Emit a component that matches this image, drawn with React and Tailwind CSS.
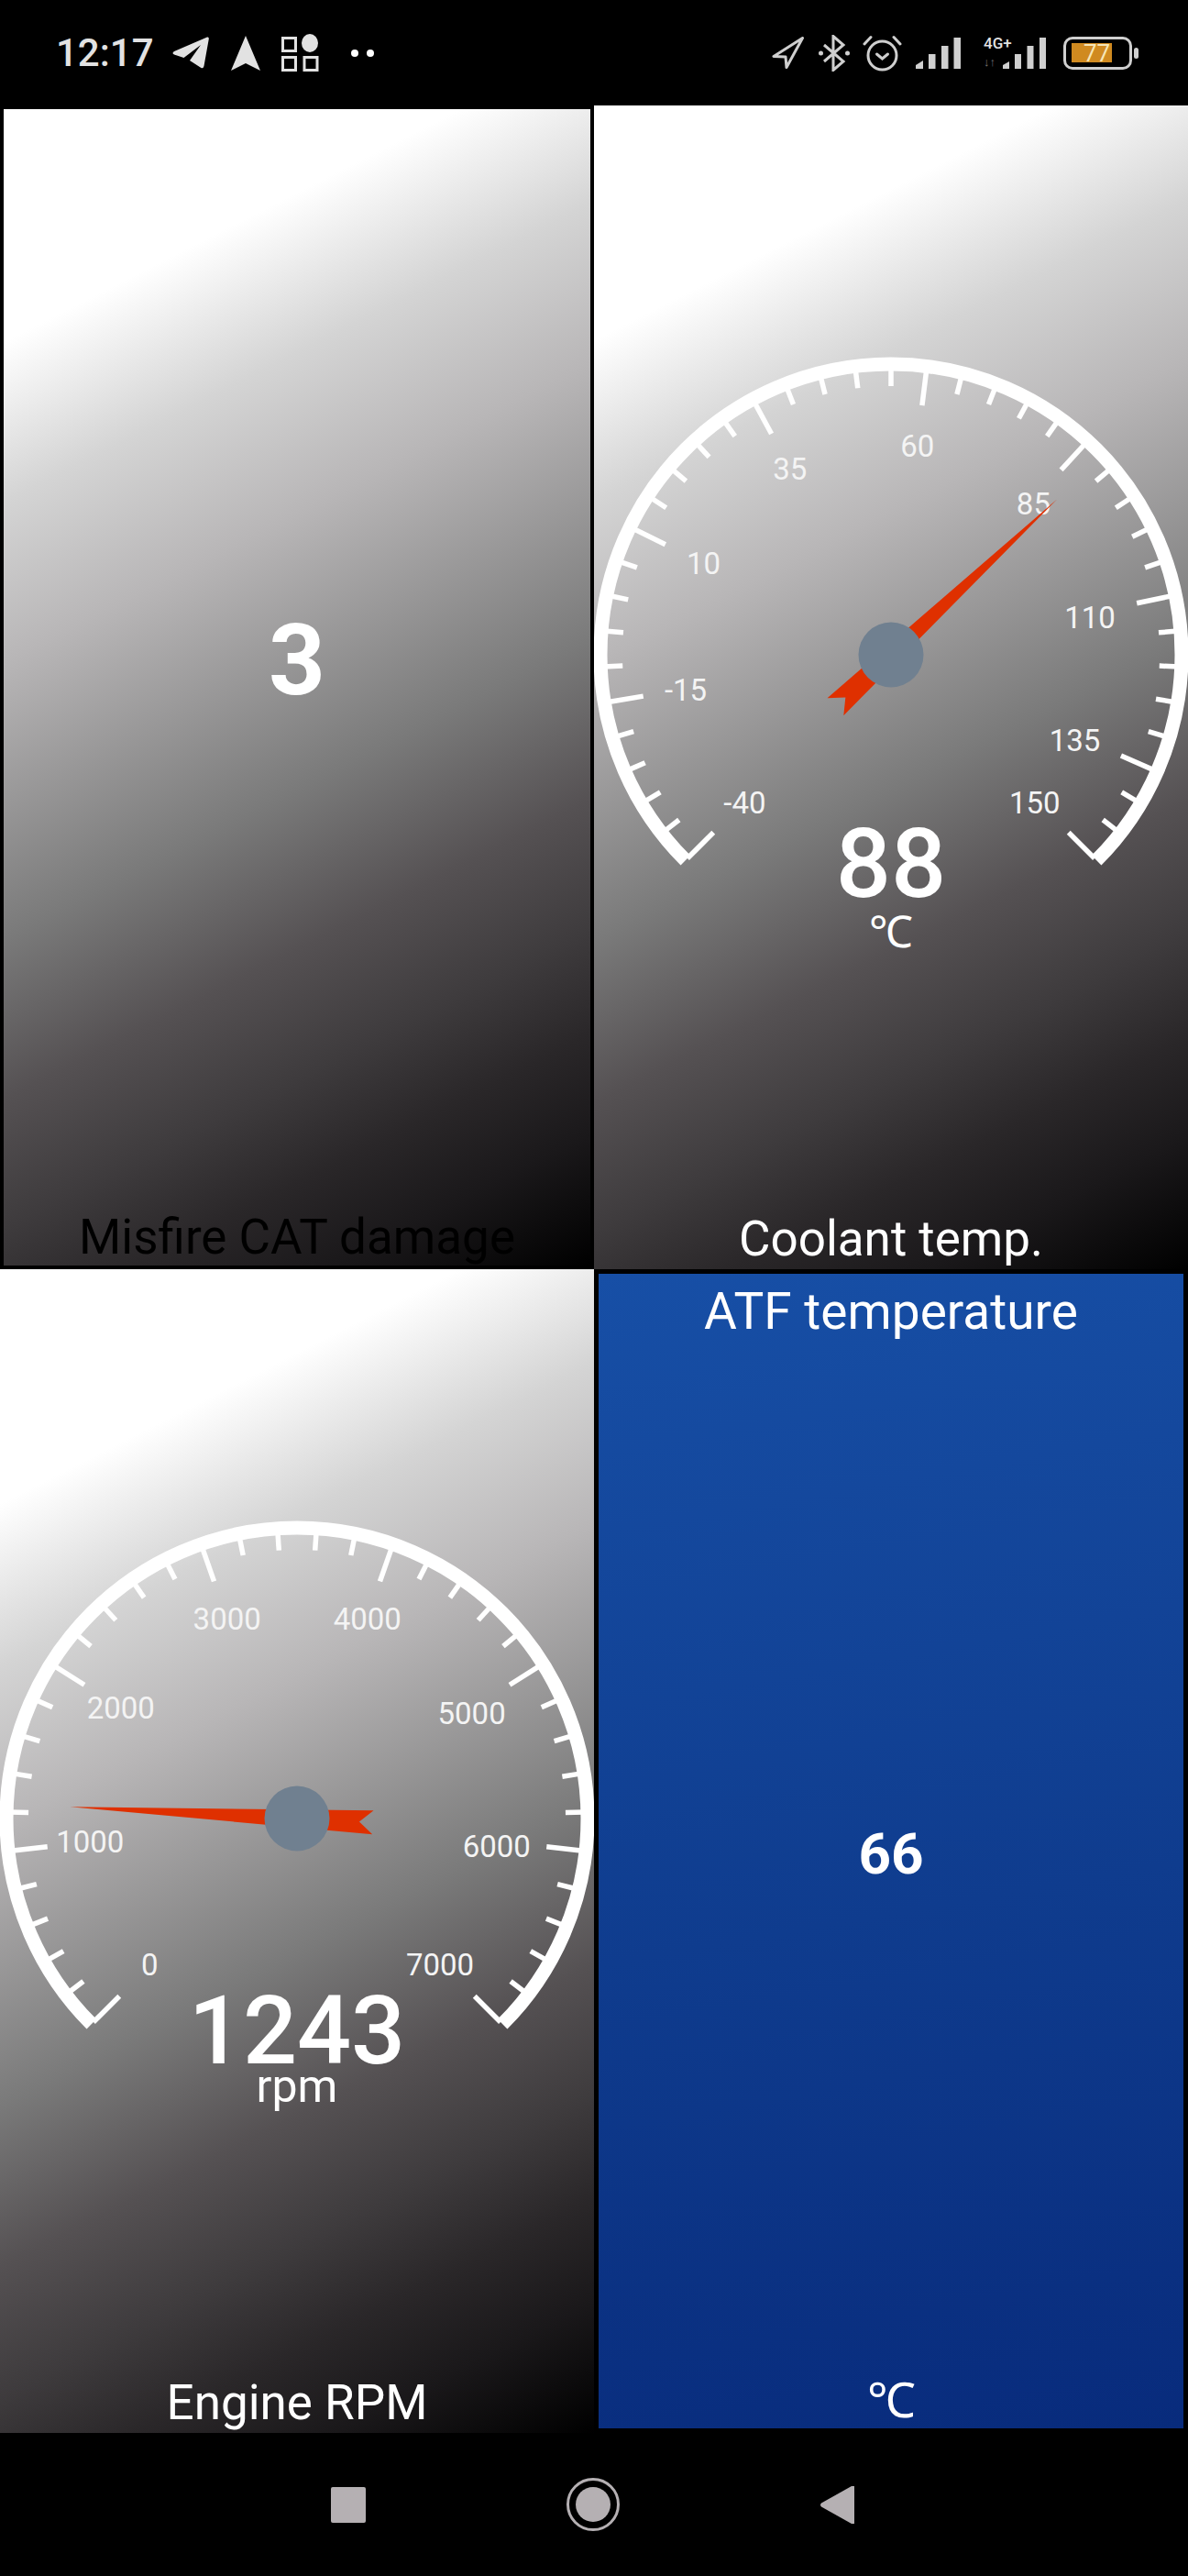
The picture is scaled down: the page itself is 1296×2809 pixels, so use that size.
// OBD dashboard screen: four tiles between the phone status bar and nav bar
const GRADIENT = 'bg-[linear-gradient(153deg,#fff_16%,#d4d4d4_27%,#b8b6b7_38%,#7a7a7a_57%,#555153_68%,#3e3b3d_77%,#2a2729_84%,#1a181a_91%,#000_100%)]';

const polar = (r, deg) => {
    const rad = (deg * Math.PI) / 180;
    return [324 + r * Math.sin(rad), 599 - r * Math.cos(rad)];
};

function Gauge({ min, max, step, minorStep, value, labels, reading, unit, readingY, readingSize, unitY, unitSize }) {
    const sweep = 270 / (max - min);
    const toDeg = (v) => (v - min) * sweep - 135;
    const ticks = [];
    for (let v = min; v <= max; v += minorStep) {
        const major = (v - min) % step === 0 || v === max;
        const [x1, y1] = polar(314, toDeg(v));
        const [x2, y2] = polar(major ? 274 : 293, toDeg(v));
        ticks.push(<line key={v} x1={x1} y1={y1} x2={x2} y2={y2} strokeWidth="5.5" />);
    }
    const [ax, ay] = polar(317, -135);
    const [bx, by] = polar(317, 135);

    return (
        <svg viewBox="0 0 648 1209" className="block w-full h-[1209px]">
            <g className="stroke-white" fill="none">
                <path d={`M${ax} ${ay} A317 317 0 1 1 ${bx} ${by}`} strokeWidth="15" />
                {ticks}
            </g>
            {labels.map(([text, dx, dy]) => (
                <text key={text} x={324 + dx} y={599 + dy + 12} textAnchor="middle" fontSize="33" className="fill-[#f4f4f4]">{text}</text>
            ))}
            <polygon points="0,-248 13,83 0,68 -13,83" className="fill-[#df3000]" transform={`translate(324 599) rotate(${toDeg(value)})`} />
            <circle cx="324" cy="599" r="35.5" className="fill-[#708090]" />
            <text x="324" y={readingY} textAnchor="middle" fontSize={readingSize} className="fill-white font-medium">{reading}</text>
            <text x="324" y={unitY} textAnchor="middle" fontSize={unitSize} className="fill-white">{unit}</text>
        </svg>
    );
}

const StatusIcons = {
    Telegram: () => (
        <svg width="40" height="35" viewBox="0 0 40 35" className="fill-[#e2e2e2]">
            <path d="M38 0.6 Q40 0 39.8 2.5 L34.5 32 Q33.8 35.4 31 33.8 L19 26 L31 9 L12.5 23 L2 19.5 Q-1 18 2 16 Z" />
        </svg>
    ),
    Arrow: () => (
        <svg width="32" height="38" viewBox="0 0 32 38" className="fill-[#e2e2e2]">
            <path d="M16 0 L32 38 L16 30 L0 38 Z" />
        </svg>
    ),
    Apps: () => (
        <svg width="41" height="41" viewBox="0 0 41 41" fill="none" className="stroke-[#e2e2e2]" strokeWidth="3">
            <rect x="1.5" y="4.5" width="14" height="14" />
            <rect x="1.5" y="25.5" width="14" height="14" />
            <rect x="25" y="25.5" width="14" height="14" />
            <ellipse cx="31" cy="10" rx="9" ry="10" className="fill-[#e2e2e2]" strokeWidth="0" />
        </svg>
    ),
    Location: () => (
        <svg width="35" height="35" viewBox="0 0 35 35" fill="none" className="stroke-[#cfcfcf]" strokeWidth="3" strokeLinejoin="round">
            <path d="M33.5 1.5 L2 21.5 L15 22 L16 33.5 Z" />
        </svg>
    ),
    Bluetooth: () => (
        <svg width="34" height="40" viewBox="0 0 34 40" fill="none" className="stroke-[#cfcfcf]" strokeWidth="3">
            <path d="M6 11 L27 29 L16 38.5 L16 1.5 L27 11 L6 29" />
            <circle cx="2.5" cy="20" r="2.5" className="fill-[#cfcfcf]" strokeWidth="0" />
            <circle cx="31.5" cy="20" r="2.5" className="fill-[#cfcfcf]" strokeWidth="0" />
        </svg>
    ),
    Alarm: () => (
        <svg width="43" height="40" viewBox="0 0 43 40" fill="none" className="stroke-[#cfcfcf]" strokeWidth="3" strokeLinecap="round">
            <circle cx="21.5" cy="22.5" r="15.5" />
            <path d="M15.5 21 L21.5 26 L27.5 21" />
            <path d="M2 10 L9 2.5" />
            <path d="M41 10 L34 2.5" />
        </svg>
    ),
    Signal: () => (
        <svg width="49" height="35" viewBox="0 0 49 35" className="fill-[#cfcfcf]">
            <path d="M0 35 L0 31 L8 26 L8 35 Z" />
            <rect x="14" y="19" width="7.5" height="16" />
            <rect x="28" y="10" width="7.5" height="25" />
            <rect x="41.5" y="1" width="7.5" height="34" />
        </svg>
    ),
};

export default function App() {
    return (
        <div className="flex flex-col w-full h-[2809px] bg-black font-[Roboto,sans-serif] overflow-hidden">
            {/* Status bar */}
            <div className="h-[115px] shrink-0 flex items-center justify-between">
                <div className="flex items-center pl-[61px]">
                    <span className="text-[42px] font-medium leading-none text-[#e2e2e2] w-[127px]">12:17</span>
                    <StatusIcons.Telegram />
                    <div className="ml-[24px]"><StatusIcons.Arrow /></div>
                    <div className="ml-[23px]"><StatusIcons.Apps /></div>
                    <div className="ml-[35px] w-[8px] h-[8px] rounded-full bg-white"></div>
                    <div className="ml-[9px] w-[8px] h-[8px] rounded-full bg-white"></div>
                </div>
                <div className="flex items-center pr-[54px]">
                    <StatusIcons.Location />
                    <div className="ml-[16px]"><StatusIcons.Bluetooth /></div>
                    <div className="ml-[14px]"><StatusIcons.Alarm /></div>
                    <div className="ml-[15px]"><StatusIcons.Signal /></div>
                    <div className="relative ml-[25px] w-[68px] h-[35px]">
                        <span className="absolute left-0 top-0 text-[17px] font-medium leading-[14px] text-[#e2e2e2]">4G+</span>
                        <span className="absolute left-0 bottom-0 text-[13px] leading-[14px] text-[#777]">↓↑</span>
                        <svg width="47" height="35" viewBox="0 0 47 35" className="absolute right-0 top-0 fill-[#cfcfcf]">
                            <path d="M0 35 L0 31 L7 27 L7 35 Z" />
                            <rect x="13" y="19" width="7" height="16" />
                            <rect x="26.5" y="10" width="7" height="25" />
                            <rect x="40" y="1" width="7" height="34" />
                        </svg>
                    </div>
                    <div className="ml-[19px] relative w-[75px] h-[36px] rounded-[10px] border-[3px] border-[#cfcfcf] flex items-center pl-[6px]">
                        <div className="w-[44px] h-[21px] bg-[#d08a20]"></div>
                        <span className="absolute left-[19px] top-0 text-[26px] leading-[30px] text-[#f6e6b8]">77</span>
                    </div>
                    <div className="ml-[2px] w-[5px] h-[12px] rounded-sm bg-[#cfcfcf]"></div>
                </div>
            </div>

            {/* Tiles */}
            <div className="grid grid-cols-2 grid-rows-[1269px_1269px] shrink-0">
                <div className="p-[4px] flex">
                    <div className={`flex-1 flex flex-col ${GRADIENT}`}>
                        <div className="flex-1 flex items-center justify-center text-[108px] font-bold leading-none text-white">3</div>
                        <div className="h-[60px] flex items-center justify-center text-[53px] text-black">Misfire CAT damage</div>
                    </div>
                </div>

                <div className={`flex flex-col ${GRADIENT}`}>
                    <Gauge
                        min={-40}
                        max={150}
                        step={25}
                        minorStep={5}
                        value={88}
                        reading="88"
                        readingSize={106}
                        unit="℃"
                        readingY={863}
                        unitY={918}
                        unitSize={48}
                        labels={[
                            ['60', 28.7, -228.2],
                            ['35', -110.2, -203.5],
                            ['85', 155.4, -165.4],
                            ['10', -204.4, -100.3],
                            ['110', 217, -41],
                            ['-15', -224, 37.6],
                            ['135', 200.6, 92.7],
                            ['-40', -159.6, 160.8],
                            ['150', 156.7, 160.8],
                        ]}
                    />
                    <div className="h-[60px] pb-[4px] flex items-center justify-center text-[53px] text-white">Coolant temp.</div>
                </div>

                <div className={`flex flex-col ${GRADIENT}`}>
                    <Gauge
                        min={0}
                        max={7000}
                        step={1000}
                        minorStep={200}
                        value={1243}
                        reading="1243"
                        readingSize={104}
                        unit="rpm"
                        readingY={865.5}
                        unitY={908}
                        unitSize={50}
                        labels={[
                            ['3000', -76.3, -218],
                            ['4000', 76.8, -218],
                            ['2000', -192.2, -120.6],
                            ['5000', 190.6, -115.2],
                            ['1000', -225.7, 25.4],
                            ['6000', 217.8, 29.9],
                            ['0', -160.8, 159.3],
                            ['7000', 156, 159.3],
                        ]}
                    />
                    <div className="h-[60px] pb-[4px] flex items-center justify-center text-[53px] text-white">Engine RPM</div>
                </div>

                <div className="p-[5px] flex">
                    <div className="flex-1 flex flex-col bg-[linear-gradient(170deg,#174fa6,#0f3c8e_55%,#082b7c)] text-white">
                        <div className="h-[66px] pt-[16px] flex items-center justify-center text-[55px] leading-[50px]">ATF temperature</div>
                        <div className="flex-1 flex items-center justify-center text-[62px] font-bold leading-none">66</div>
                        <div className="h-[60px] flex items-center justify-center text-[53px] leading-none">℃</div>
                    </div>
                </div>
            </div>

            {/* Nav bar */}
            <div className="flex-1 flex items-center justify-center gap-[219px] pr-[3px]">
                <div className="w-[38px] h-[39px] rounded-[2px] bg-[#b5b0b3]"></div>
                <div className="w-[58px] h-[58px] rounded-full border-[3px] border-[#b5b0b3] flex items-center justify-center">
                    <div className="w-[38px] h-[38px] rounded-full bg-[#b5b0b3]"></div>
                </div>
                <svg width="37" height="43" viewBox="0 0 37 43" className="fill-[#b5b0b3]">
                    <path d="M37 1 L37 42 L34 42 L1 23.5 Q-1 21.5 1 19.5 L34 1 Z" />
                </svg>
            </div>
        </div>
    );
}
